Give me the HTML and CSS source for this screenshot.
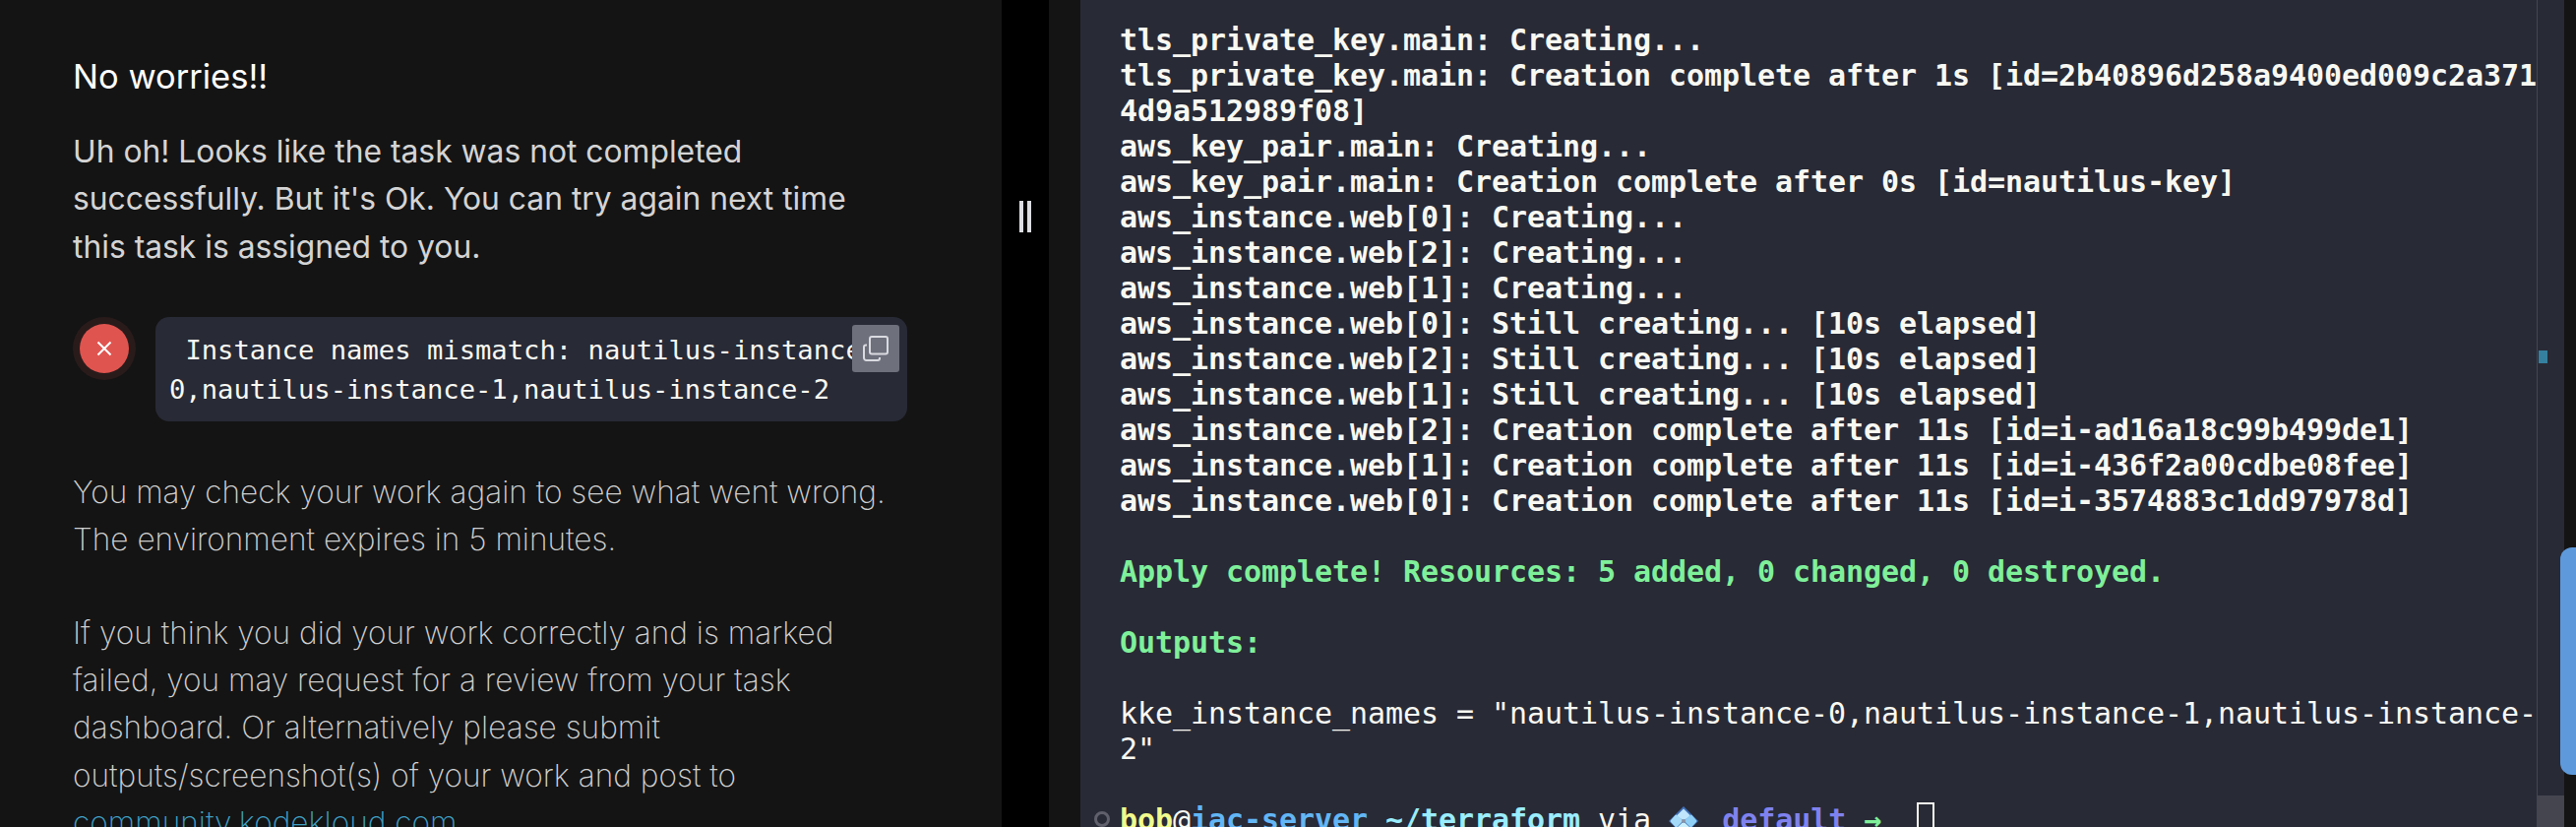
FILE: index.html
```html
<!DOCTYPE html>
<html lang="en">
<head>
<meta charset="utf-8">
<title>Task result</title>
<link rel="stylesheet" href="styles.css">
</head>
<body>
<div class="app">
  <section class="panel">
    <h2 class="title">No worries!!</h2>
    <p class="lead">Uh oh! Looks like the task was not completed successfully. But it's Ok. You can try again next time this task is assigned to you.</p>
    <div class="result">
      <div class="fail-icon">
        <svg viewBox="0 0 16 16" width="16" height="16" fill="none" stroke="#fff" stroke-width="2"><path d="M1.5 1.5l13 13M14.5 1.5l-13 13"/></svg>
      </div>
      <div class="code-box">
        <code class="code-text"> Instance names mismatch: nautilus-instance-0,nautilus-instance-1,nautilus-instance-2</code>
        <button class="copy-btn" aria-label="Copy">
          <svg viewBox="0 0 26 26" width="26" height="26" fill="none" stroke="#d9dae0" stroke-width="2"><rect x="7" y="1" width="18" height="17.5" rx="2"/><path d="M4 9.5H3a2 2 0 0 0-2 2V22.5a2.500 2.500 0 0 0 2.500 2.500H15a2 2 0 0 0 2-2v-1"/></svg>
        </button>
      </div>
    </div>
    <p class="note">You may check your work again to see what went wrong. The environment expires in 5 minutes.</p>
    <p class="note">If you think you did your work correctly and is marked failed, you may request for a review from your task dashboard. Or alternatively please submit outputs/screenshot(s) of your work and post to <a class="link" href="#">community.kodekloud.com</a></p>
  </section>
  <div class="divider"><span class="grip"></span><span class="grip"></span></div>
  <div class="gutter"></div>
  <main class="terminal">
<pre class="screen">tls_private_key.main: Creating...
tls_private_key.main: Creation complete after 1s [id=2b40896d258a9400ed009c2a371
4d9a512989f08]
aws_key_pair.main: Creating...
aws_key_pair.main: Creation complete after 0s [id=nautilus-key]
aws_instance.web[0]: Creating...
aws_instance.web[2]: Creating...
aws_instance.web[1]: Creating...
aws_instance.web[0]: Still creating... [10s elapsed]
aws_instance.web[2]: Still creating... [10s elapsed]
aws_instance.web[1]: Still creating... [10s elapsed]
aws_instance.web[2]: Creation complete after 11s [id=i-ad16a18c99b499de1]
aws_instance.web[1]: Creation complete after 11s [id=i-436f2a00cdbe08fee]
aws_instance.web[0]: Creation complete after 11s [id=i-3574883c1dd97978d]

<span class="green">Apply complete! Resources: 5 added, 0 changed, 0 destroyed.</span>

<span class="green">Outputs:</span>

<span class="plain">kke_instance_names = "nautilus-instance-0,nautilus-instance-1,nautilus-instance-
2"</span>

<span class="yellow">bob</span><span class="plain">@</span><span class="blue">iac-server</span> <span class="cyan">~/terraform</span> <span class="plain">via</span> <span class="gem"><svg viewBox="0 0 30 30" width="30" height="30"><path d="M15 0L30 15 15 30 0 15z" fill="#3f6fb8"/><path d="M15 2.500l6 6a1.500 1.500 0 0 1 0 2L15 14.500 9 10.500a1.500 1.500 0 0 1 0-2z" fill="#bfe6fb"/><path d="M8.500 9l6 5.800-6 6a1.500 1.500 0 0 1-2 0L2.500 16.500a2 2 0 0 1 0-3l4-4.500a1.500 1.500 0 0 1 2 0z" fill="#a5dbf8"/><path d="M21.500 9l-6 5.800 6 6a1.500 1.500 0 0 0 2 0l4-4.300a2 2 0 0 0 0-3l-4-4.500a1.500 1.500 0 0 0-2 0z" fill="#8fcff5"/><path d="M15 15.500l6 5.500a1.500 1.500 0 0 1 0 2L15 27.500 9 23a1.500 1.500 0 0 1 0-2z" fill="#c9effc"/><circle cx="15" cy="15" r="2" fill="#8a93a6"/></svg></span> <span class="purple">default</span> <span class="green">→</span>  <span class="cursor"></span></pre>
    <span class="status-dot"></span>
    <div class="rail">
      <span class="rail-mark"></span>
      <span class="rail-corner"></span>
    </div>
  </main>
  <div class="edge"></div>
  <div class="fab"></div>
</div>
</body>
</html>
```

FILE: styles.css
```css
* { box-sizing: border-box; }
html, body { margin: 0; height: 100%; background: #141414; }
.app { position: relative; display: flex; width: 2618px; height: 840px; overflow: hidden; }

.panel {
  flex: 0 0 1018px;
  height: 840px;
  overflow: hidden;
  background: #141414;
  padding: 54px 0 0 74px;
  font-family: Inter, "Liberation Sans", sans-serif;
}
.title { margin: 0 0 28px; font-size: 34.5px; line-height: 48px; font-weight: 400; color: #fff; }
.lead { margin: 0 0 47px; width: 840px; font-size: 31.8px; line-height: 48.33px; font-weight: 400; color: #d4d4d4; }

.result { display: flex; align-items: flex-start; gap: 20px; margin: 0 0 48px; width: 848px; }
.fail-icon {
  flex: 0 0 50px;
  height: 50px;
  margin: 7px 0 0 7px;
  display: flex;
  align-items: center;
  justify-content: center;
  border-radius: 50%;
  background: #e0544f;
  box-shadow: 0 0 0 7px #2a1b1b;
}
.code-box {
  position: relative;
  flex: 0 0 764px;
  height: 106px;
  margin-left: 7px;
  padding: 14px 14px;
  border-radius: 14px;
  background: #282a36;
}
.code-text {
  display: block;
  font-family: "DejaVu Sans Mono", monospace;
  font-size: 27.2px;
  line-height: 40px;
  color: #f8f8f2;
  white-space: pre-wrap;
  word-break: break-all;
}
.copy-btn {
  position: absolute;
  top: 8px;
  right: 8px;
  width: 48px;
  height: 48px;
  padding: 0;
  border: 0;
  border-radius: 3px;
  background: #6e707c;
  display: flex;
  align-items: center;
  justify-content: center;
}

.note { margin: 0 0 46px; width: 840px; font-size: 31.6px; line-height: 48.33px; font-weight: 200; color: #cfcfcf; }
.link { color: #3f9fc4; text-decoration: none; }

.divider {
  flex: 0 0 48px;
  height: 840px;
  background: #000;
  display: flex;
  align-items: center;
  justify-content: center;
  gap: 4px;
  padding-bottom: 400px;
}
.grip { width: 4px; height: 32px; background: #dcdde3; }
.gutter { flex: 0 0 32px; background: #141414; }

.terminal {
  position: relative;
  flex: 0 0 1508px;
  height: 840px;
  overflow: hidden;
  background: #282a36;
  padding: 23px 0 0 40px;
}
.screen {
  margin: 0;
  font-family: "DejaVu Sans Mono", monospace;
  font-size: 30px;
  line-height: 36px;
  font-weight: 700;
  letter-spacing: -0.06px;
  color: #f8f8f2;
}
.green { color: #7ff09a; }
.plain { font-weight: 400; }
.yellow { color: #f1fa8c; }
.blue { color: #62b6f5; }
.cyan { color: #9aedfe; }
.purple { color: #7f82ee; }
.gem { display: inline-block; width: 36px; height: 30px; vertical-align: -6px; }
.gem svg { display: block; }
.cursor {
  display: inline-block;
  width: 18px;
  height: 36px;
  border: 2px solid #f8f8f2;
  vertical-align: -8px;
}
.status-dot {
  position: absolute;
  left: 14px;
  top: 824px;
  width: 16px;
  height: 16px;
  border: 3px solid #5f606b;
  border-radius: 50%;
}
.rail {
  position: absolute;
  top: 0;
  right: 0;
  width: 28px;
  height: 840px;
  border-left: 1px solid #44454f;
}
.rail-mark { position: absolute; left: 1px; top: 356px; width: 9px; height: 13px; background: #35809f; }
.rail-corner { position: absolute; left: -1px; bottom: 0; width: 28px; height: 32px; background: #44454f; }
.edge { flex: 1; background: #141414; }
.fab {
  position: absolute;
  right: 0;
  top: 556px;
  width: 16px;
  height: 231px;
  border-radius: 12px 0 0 12px;
  background: #5e9adb;
}
```
